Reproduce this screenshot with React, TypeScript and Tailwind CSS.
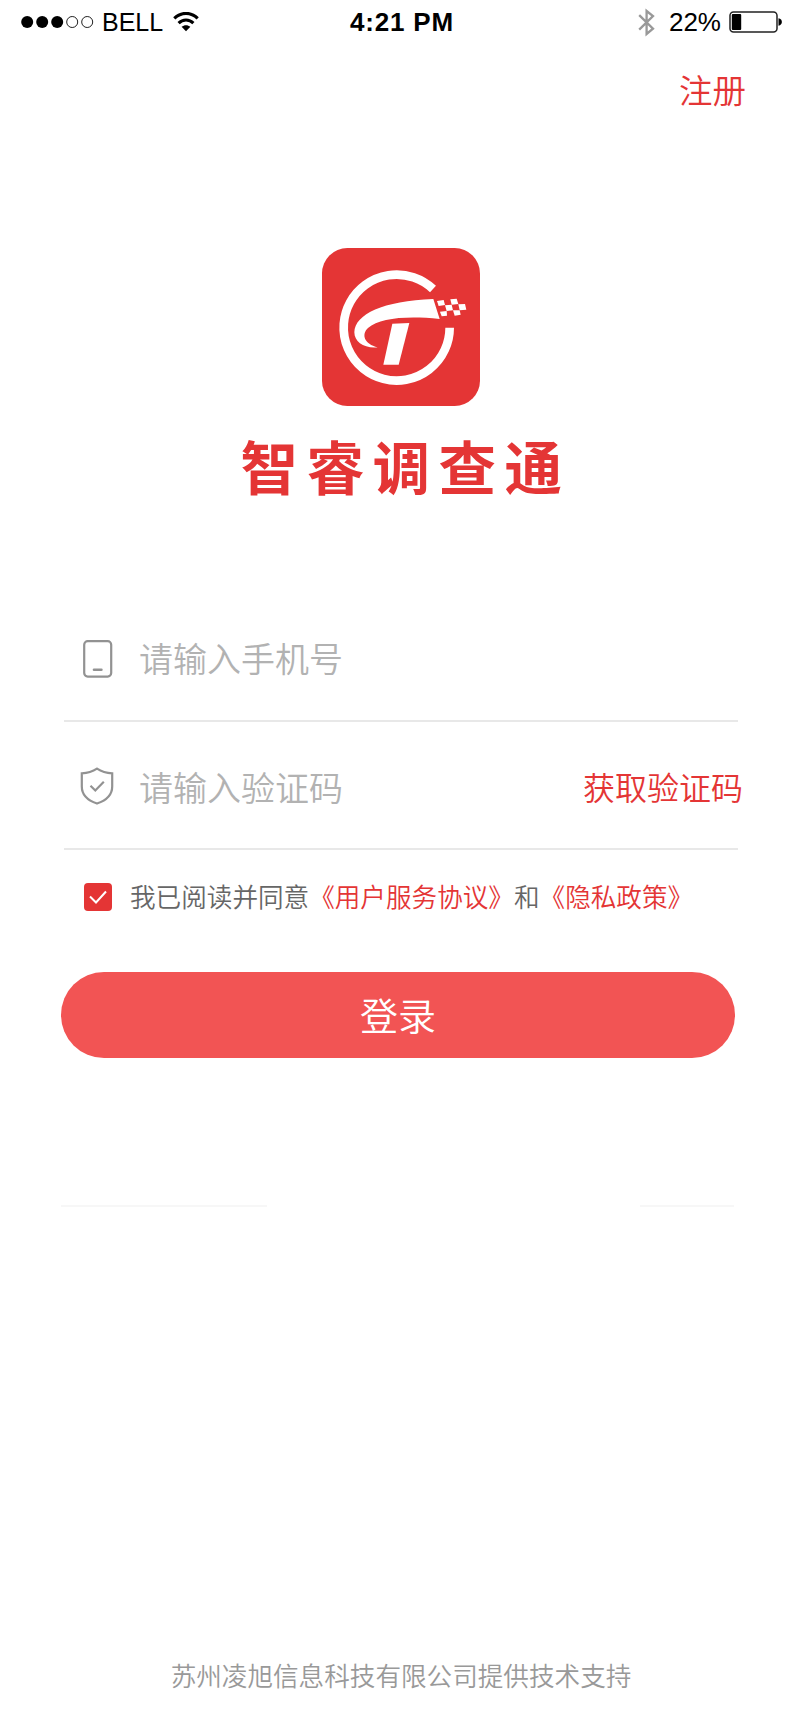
import { useState } from "react";

const SignalDots = () => (
  <svg width="73" height="14" viewBox="0 0 73 14">
    {[6.2, 21.2, 36.2].map((cx) => (
      <circle key={cx} cx={cx} cy="7" r="6" fill="#000" />
    ))}
    {[51.2, 66.2].map((cx) => (
      <circle key={cx} cx={cx} cy="7" r="5.5" fill="none" stroke="#222" strokeWidth="1" />
    ))}
  </svg>
);

const WifiIcon = () => (
  <svg width="26" height="20" viewBox="0 0 26 20" fill="none" stroke="#000" strokeWidth="3.1">
    <path d="M1.3 6.4C8 -0.3 18 -0.3 24.7 6.4" />
    <path d="M5.6 11.1C9.8 7 16.2 7 20.4 11.1" />
    <path d="M13 19.2L8.6 14.8C11.2 12.6 14.8 12.6 17.4 14.8Z" fill="#000" stroke="none" />
  </svg>
);

const BluetoothIcon = () => (
  <svg width="17" height="29" viewBox="0 0 17 29" fill="none" stroke="#999" strokeWidth="2.3">
    <path d="M1.2 7.2L15 20.6L8.6 26V3L15 8.2L1.2 21.6" />
  </svg>
);

const BatteryIcon = () => (
  <svg width="54" height="22" viewBox="0 0 54 22">
    <rect x="1" y="1" width="47" height="20" rx="3.5" fill="none" stroke="#222" strokeWidth="1.5" />
    <rect x="2.8" y="3" width="9.4" height="16" rx="1" fill="#000" />
    <path d="M49.5 7.3C54 8 54 14 49.5 14.7Z" fill="#000" />
  </svg>
);

const Logo = () => (
  <svg width="158" height="158" viewBox="37 40 474 474" fill="#fff">
    <rect x="37" y="40" width="474" height="474" rx="76" fill="#e43535" />
    <path d="M370 163A159 159 0 1 0 420 279" fill="none" stroke="#fff" strokeWidth="26" />
    <path d="M371 193L390 253C290 243 210 250 175 280C154 300 164 328 204 338C164 342 134 322 134 293C136 238 220 199 371 193Z" />
    <path d="M248 267L299 265L267 390H221Z" />
    <path d="M382 199L402 196L406 211L387 214Z" />
    <path d="M422 194L441 192L446 208L426 210Z" />
    <path d="M406 212L426 210L430 227L411 229Z" />
    <path d="M446 209L466 208L470 225L450 227Z" />
    <path d="M391 231L411 229L412 243L396 245Z" />
    <path d="M430 227L450 227L453 240L435 243Z" />
  </svg>
);

const PhoneIcon = () => (
  <svg width="30" height="38" viewBox="0 0 30 38" fill="none" stroke="#929292" strokeWidth="2.2">
    <rect x="1.2" y="1.2" width="27" height="35.4" rx="3.5" />
    <path d="M11 29.8H18.4" strokeWidth="2.6" strokeLinecap="round" />
  </svg>
);

const ShieldIcon = () => (
  <svg width="34" height="38" viewBox="0 0 34 38" fill="none" stroke="#929292" strokeWidth="2.2">
    <path d="M17 1.6C12.5 4.5 7.5 6 1.8 6.3V19.5C1.8 27.5 8 33.5 17 36.5C26 33.5 32.2 27.5 32.2 19.5V6.3C26.5 6 21.5 4.5 17 1.6Z" />
    <path d="M10.5 18.8L15.3 23.5L23.8 14.8" />
  </svg>
);

export default function App() {
  const [phone, setPhone] = useState("");
  const [code, setCode] = useState("");
  const [agreed, setAgreed] = useState(true);

  return (
    <div className="flex h-[1724px] w-[800px] flex-col bg-white font-['Noto_Sans_CJK_SC',sans-serif] font-[350] text-[#e43535]">
      <header className="grid h-11 grid-cols-3 items-center pl-[21px] pr-[17px] font-['Liberation_Sans',sans-serif] text-[26px] font-normal leading-none text-black">
        <div className="flex items-center">
          <SignalDots />
          <span className="ml-2 text-[25px]">BELL</span>
          <span className="ml-2.5">
            <WifiIcon />
          </span>
        </div>
        <div className="text-center text-[26px] font-bold tracking-[0.8px]">4:21 PM</div>
        <div className="flex items-center justify-end">
          <BluetoothIcon />
          <span className="ml-3.5 mr-2">22%</span>
          <BatteryIcon />
        </div>
      </header>

      <div className="flex h-[94px] justify-end pr-[54px] pt-[21px]">
        <button className="h-12 text-[33.5px] leading-[48px]">注册</button>
      </div>

      <div className="mt-[110px] flex flex-col items-center pl-[2px]">
        <Logo />
        <h1 className="mt-[19px] h-20 pl-[9px] text-[57.5px] font-bold leading-[80px] tracking-[8.5px]">
          智睿调查通
        </h1>
      </div>

      <form className="mt-[92px] flex flex-col pl-16 pr-[62px]" onSubmit={(e) => e.preventDefault()}>
        <label className="flex h-[125px] items-center border-b-2 border-[#e8e8e8] pl-[19px]">
          <PhoneIcon />
          <input
            className="-mt-0.5 ml-[26px] h-14 w-[400px] text-[34px] outline-none placeholder:text-[#b2b2b2]"
            placeholder="请输入手机号"
            value={phone}
            onChange={(e) => setPhone(e.target.value)}
          />
        </label>
        <div className="flex h-32 items-center border-b-2 border-[#e8e8e8] pl-4 pt-0.5">
          <ShieldIcon />
          <input
            className="ml-[25px] h-14 w-[400px] text-[34px] outline-none placeholder:text-[#b2b2b2]"
            placeholder="请输入验证码"
            value={code}
            onChange={(e) => setCode(e.target.value)}
          />
          <button type="button" className="-mr-[5px] ml-auto whitespace-nowrap text-[32px]">
            获取验证码
          </button>
        </div>

        <div className="flex h-[94px] items-center pl-5 text-[25.6px] text-[#666]">
          <button
            type="button"
            className="flex size-7 items-center justify-center rounded bg-[#e43535]"
            onClick={() => setAgreed(!agreed)}
          >
            {agreed && (
              <svg width="20" height="16" viewBox="0 0 20 16" fill="none" stroke="#fff" strokeWidth="2">
                <path d="M2 7.5L8 13.5L18 2.5" />
              </svg>
            )}
          </button>
          <p className="-mt-px ml-[18px] whitespace-nowrap">
            我已阅读并同意<span className="text-[#e43535]">《用户服务协议》</span>和
            <span className="text-[#e43535]">《隐私政策》</span>
          </p>
        </div>

        <button className="-ml-[3px] mt-7 h-[86px] w-[674px] rounded-full bg-[#f25454] text-[38px] leading-none text-white">
          <span className="block -mt-0.5">登录</span>
        </button>
      </form>

      <div className="mt-[147px] flex justify-between pl-[61px] pr-[66px]">
        <div className="h-0.5 w-[206px] bg-[#f7f7f7]" />
        <div className="h-0.5 w-[94px] bg-[#f7f7f7]" />
      </div>

      <footer className="mb-[29px] mt-auto pl-0.5 text-center text-[25.6px] leading-10 text-[#999]">
        苏州凌旭信息科技有限公司提供技术支持
      </footer>
    </div>
  );
}
